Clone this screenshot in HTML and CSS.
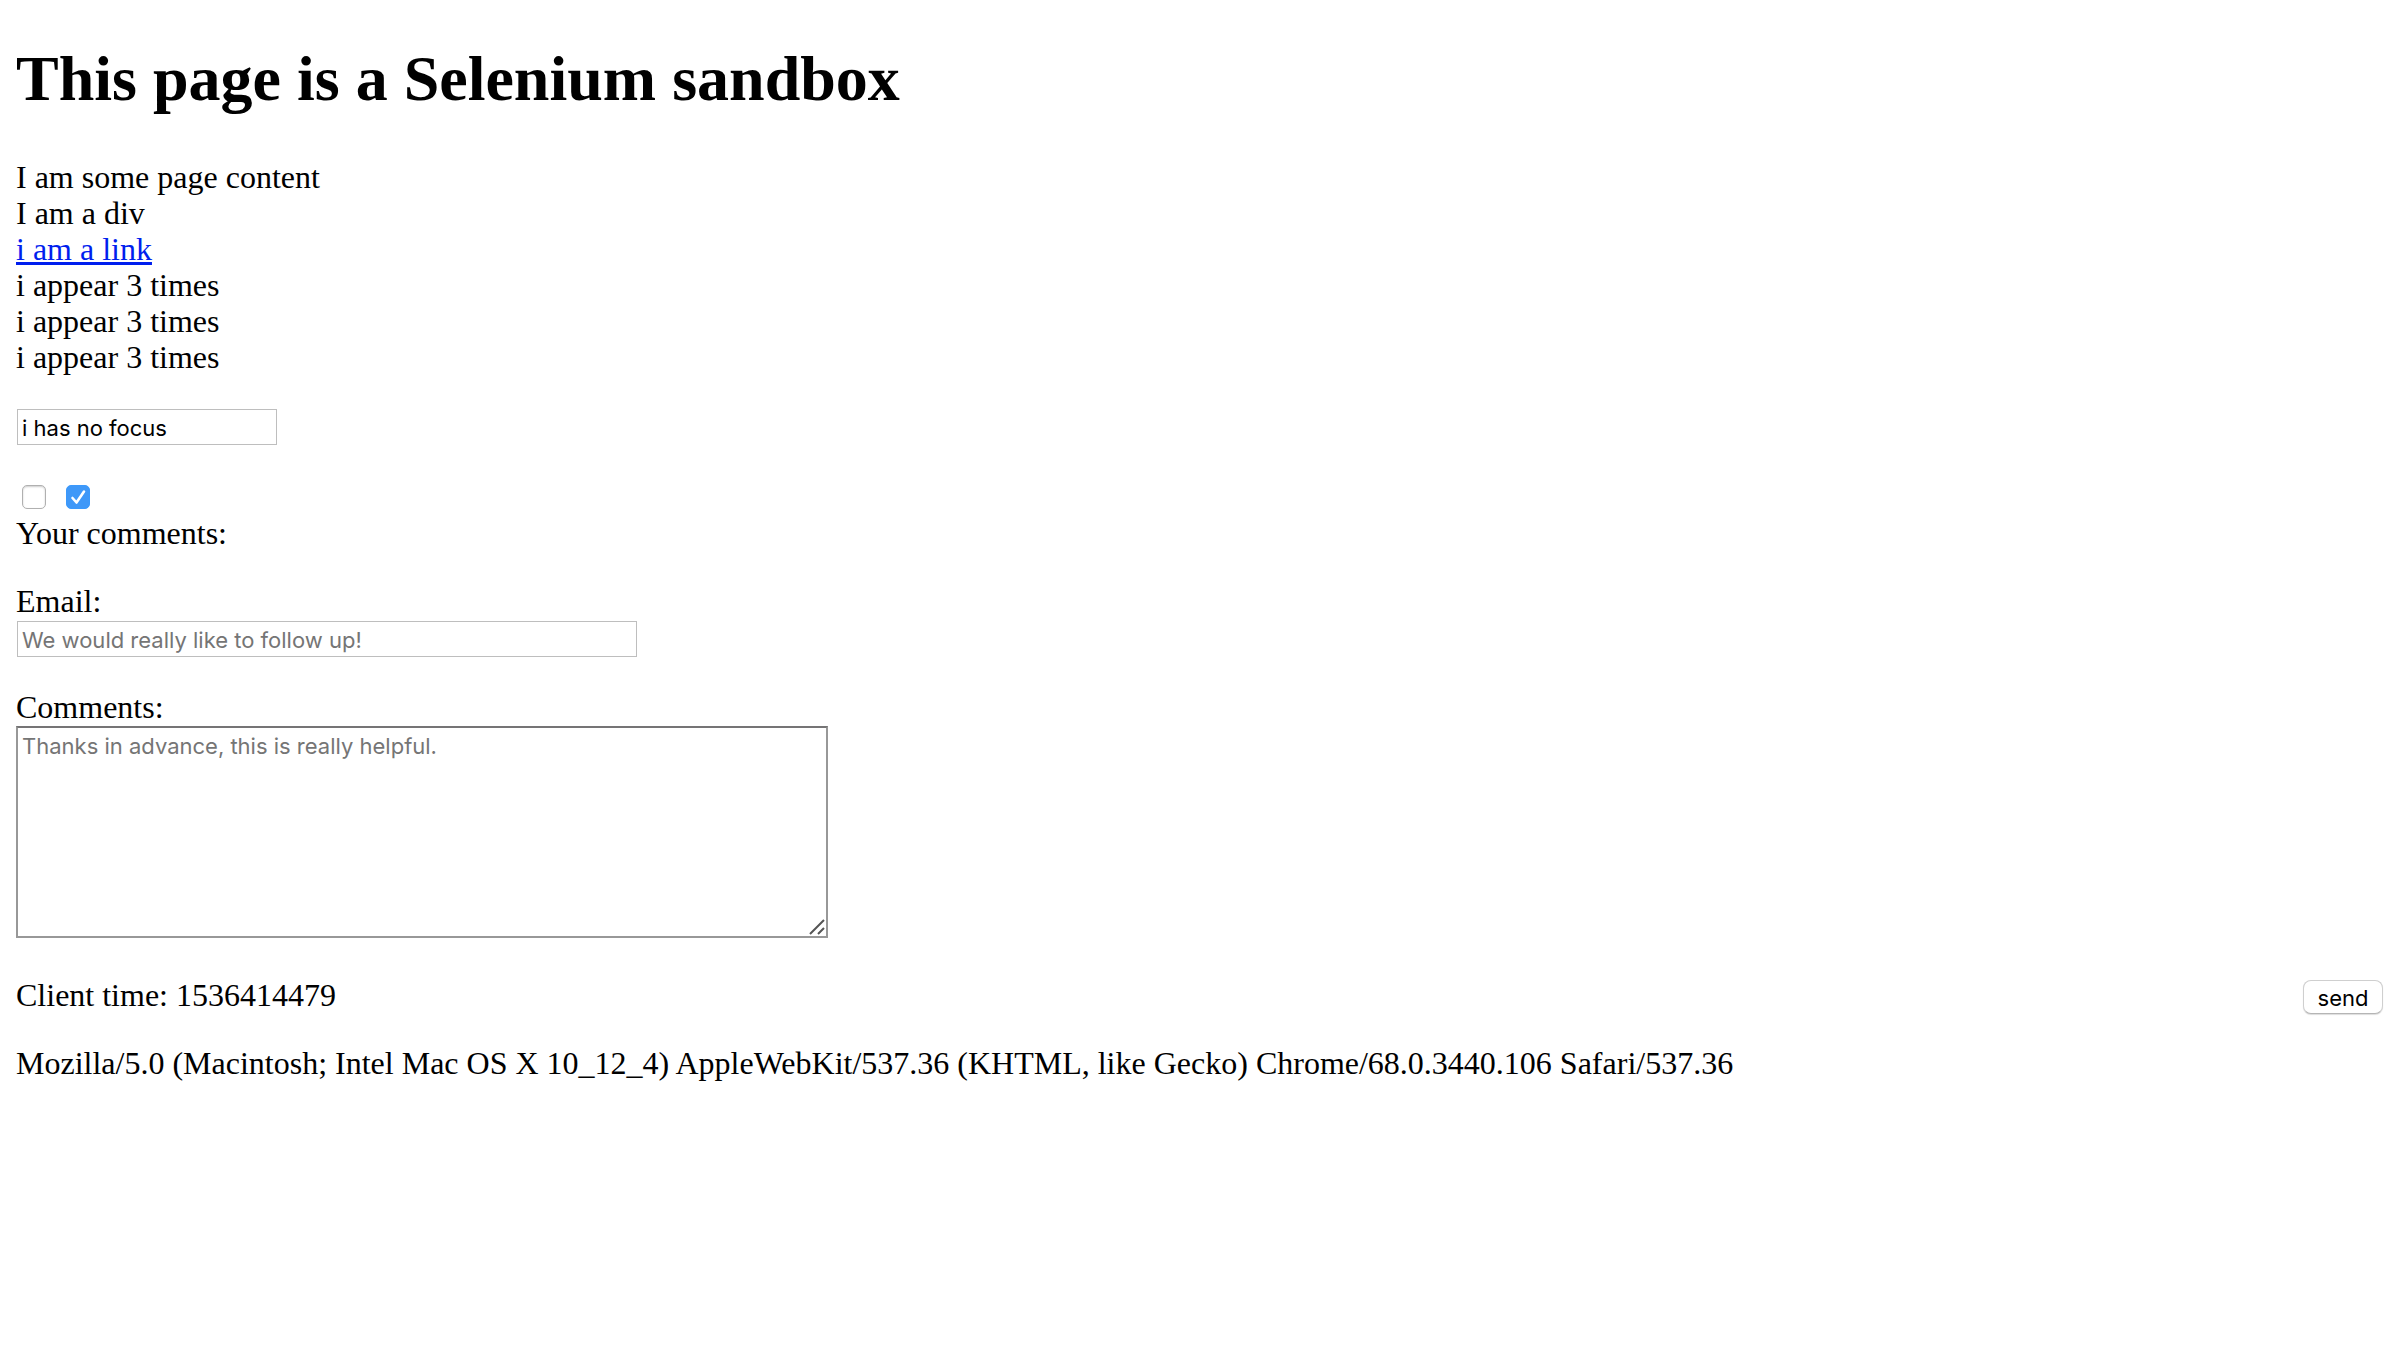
FILE: index.html
```html
<!DOCTYPE html>
<html lang="en">
<head>
<meta charset="utf-8">
<title>I am a page title - Sauce Labs</title>
<link rel="stylesheet" href="styles.css">
</head>
<body>
<h1>This page is a Selenium sandbox</h1>
<div>I am some page content</div>
<div>I am a div</div>
<div><a href="#">i am a link</a></div>
<div>i appear 3 times</div>
<div>i appear 3 times</div>
<div>i appear 3 times</div>
<form class="form">
<div class="row"><input class="field" type="text" value="i has no focus" aria-label="Text"></div>
<div class="checks"><input class="check" type="checkbox" aria-label="Unchecked"><input class="check" type="checkbox" checked aria-label="Checked"></div>
<div>Your comments:</div>
<div class="row"><label for="email">Email:</label><input class="field field-wide" id="email" type="text" placeholder="We would really like to follow up!"></div>
<div class="row"><label for="comments">Comments:</label>
<div class="area-box"><textarea class="area" id="comments" placeholder="Thanks in advance, this is really helpful."></textarea><svg class="grip" viewBox="0 0 16 16" aria-hidden="true"><path d="M1 15 15 1M9 15l6-6" fill="none" stroke="#555" stroke-width="2"/></svg></div></div>
<div class="footer"><span>Client time: 1536414479</span><button class="send" type="button">send</button></div>
</form>
<p class="agent">Mozilla/5.0 (Macintosh; Intel Mac OS X 10_12_4) AppleWebKit/537.36 (KHTML, like Gecko) Chrome/68.0.3440.106 Safari/537.36</p>
</body>
</html>
```
FILE: styles.css
```css
body {
  margin: 0;
  padding: 16px;
  font-family: "Liberation Serif", "Times New Roman", serif;
  font-size: 32px;
  line-height: 36px;
  color: #000;
  background: #fff;
}

h1 {
  margin: 26px 0 43px;
  font-size: 64px;
  line-height: 74px;
}

a { color: #001eee; }

.row {
  display: flex;
  flex-direction: column;
  align-items: flex-start;
  margin: 32px 0;
}

.field,
.area,
.send {
  box-sizing: border-box;
  font-family: Inter, sans-serif;
  font-size: 22px;
  line-height: 28px;
  color: #000;
  background: #fff;
}

.field {
  width: 260px;
  height: 36px;
  margin: 2px 1px 0;
  padding: 4px 4px 2px;
  border: 1px solid #bebebe;
  border-radius: 0;
}

.field-wide { width: 620px; }

.area-box {
  position: relative;
  display: flex;
  margin-top: 1px;
}

.area {
  width: 812px;
  height: 212px;
  padding: 4px;
  border: 2px solid #989898;
  border-top-color: #757475;
  border-radius: 0;
  resize: none;
}

.grip {
  position: absolute;
  right: 3px;
  bottom: 3px;
  width: 16px;
  height: 16px;
}

::placeholder {
  color: #757575;
  opacity: 1;
}

.checks {
  display: flex;
  gap: 20px;
  padding: 8px 6px 6px;
}

.check {
  appearance: none;
  width: 24px;
  height: 24px;
  margin: 0;
  border: 1px solid #b0b0b0;
  border-radius: 5px;
  box-shadow: inset 0 1px 2px #ccc;
}

.check:checked {
  border-color: #3b99fc;
  background: #3f98f8 url("data:image/svg+xml,%3Csvg xmlns='http://www.w3.org/2000/svg' viewBox='0 0 22 22'%3E%3Cpath d='M5.5 12 9.5 16.5 17 5.5' fill='none' stroke='white' stroke-width='2.6' stroke-linecap='round' stroke-linejoin='round'/%3E%3C/svg%3E") center / 22px 22px no-repeat;
  box-shadow: none;
}

.footer {
  display: flex;
  justify-content: space-between;
  margin-top: 39px;
}

.send {
  width: 80px;
  height: 34px;
  margin: 3px 1px 0;
  padding: 1px 0 0;
  border: 1px solid #cfcfcf;
  border-bottom-color: #b5b5b5;
  border-radius: 8px;
  box-shadow: 0 1px 1px #ddd;
}

.agent { margin: 31px 0; }
```
